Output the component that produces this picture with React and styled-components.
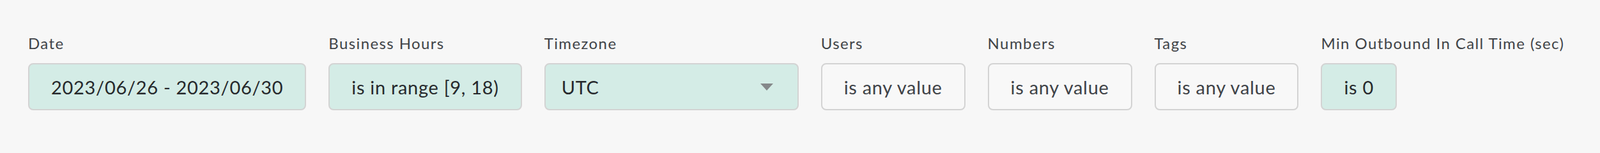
import React from "react"
import styled, { createGlobalStyle } from "styled-components"

const GlobalStyle = createGlobalStyle`
  html, body {
    margin: 0;
    padding: 0;
    background: #f7f7f7;
  }
  body {
    font-family: Lato, "Noto Sans", sans-serif;
  }
`

const filters = [
  { label: "Date", value: "2023/06/26 - 2023/06/30", active: true },
  { label: "Business Hours", value: "is in range [9, 18)", active: true },
  { label: "Timezone", value: "UTC", active: true, select: true },
  { label: "Users", value: "is any value" },
  { label: "Numbers", value: "is any value" },
  { label: "Tags", value: "is any value" },
  { label: "Min Outbound In Call Time (sec)", value: "is 0", active: true },
]

const App = () => {
  return (
    <>
      <GlobalStyle />
      <FilterBar>
        {filters.map((f) => (
          <Field key={f.label}>
            <Label>{f.label}</Label>
            {f.select ? (
              <SelectBox active={f.active ? 1 : 0}>
                <span>{f.value}</span>
                <Caret />
              </SelectBox>
            ) : (
              <ValueBox active={f.active ? 1 : 0}>{f.value}</ValueBox>
            )}
          </Field>
        ))}
      </FilterBar>
    </>
  )
}

export default App

const FilterBar = styled.div`
  display: flex;
  align-items: flex-start;
  gap: 35px;
  height: 220px;
  box-sizing: border-box;
  padding: 52px 44px 0;
`

const Field = styled.div`
  display: flex;
  flex-direction: column;
  align-items: flex-start;
`

const Label = styled.div`
  font-size: 24px;
  line-height: 32px;
  letter-spacing: 1.4px;
  color: #404347;
  margin-bottom: 15px;
  white-space: nowrap;
`

const ValueBox = styled.div`
  display: inline-flex;
  align-items: center;
  box-sizing: border-box;
  height: 74px;
  padding: 0 34px;
  border: 2px solid #d3d3d3;
  border-radius: 8px;
  background: ${(p) => (p.active ? "#d4ece6" : "#f8f8f8")};
  color: ${(p) => (p.active ? "#26292c" : "#3e4247")};
  font-size: 29px;
  letter-spacing: 0.7px;
  white-space: nowrap;
`

const SelectBox = styled(ValueBox)`
  justify-content: space-between;
  width: 398px;
  padding: 0 38px 0 25px;
`

const Caret = styled.span`
  width: 0;
  height: 0;
  border-left: 10.5px solid transparent;
  border-right: 10.5px solid transparent;
  border-top: 11px solid #85888a;
`
